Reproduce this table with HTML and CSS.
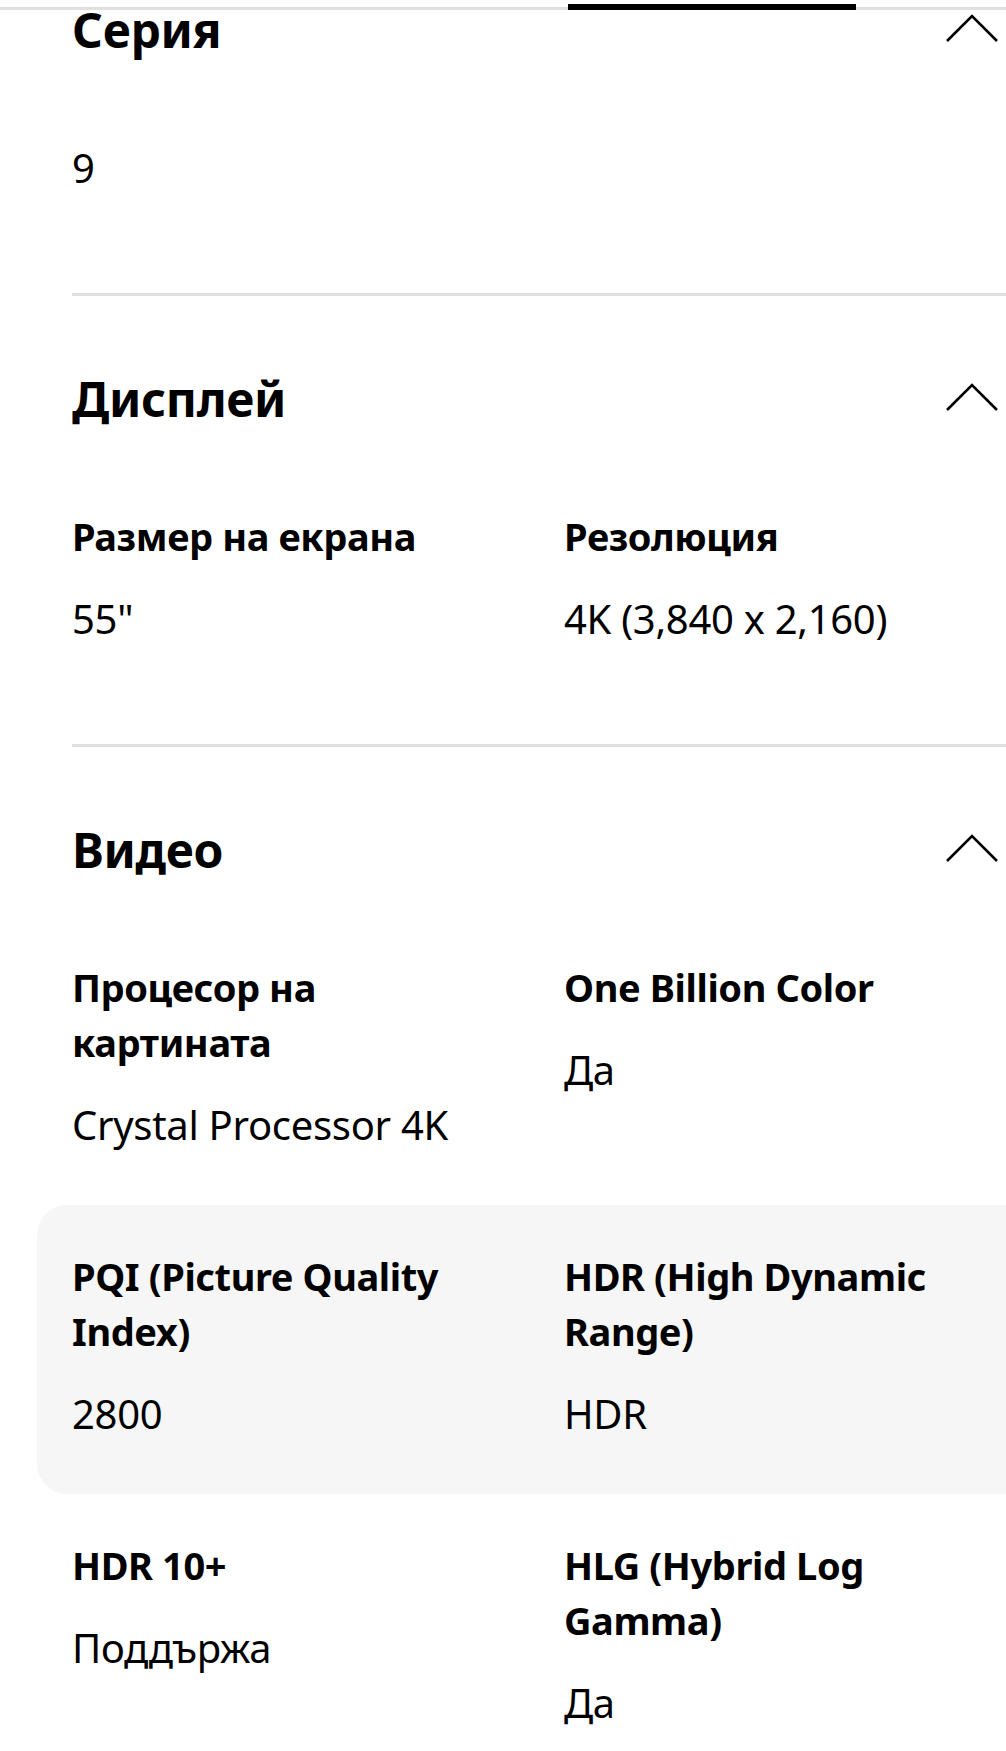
FILE: index.html
```html
<!DOCTYPE html>
<html lang="bg">
<head>
<meta charset="utf-8">
<title>Спецификации</title>
<link rel="stylesheet" href="styles.css">
</head>
<body>
<div class="tabbar" aria-hidden="true">
  <div class="tab-indicator"></div>
</div>
<main class="specs">
  <section class="spec-group">
    <div class="group-head group-head--first">
      <h2 class="group-title">Серия</h2>
      <svg class="chevron" width="54" height="30" viewBox="0 0 54 30"><polyline points="2,28 27,3 52,28" fill="none" stroke="#000" stroke-width="2.6"/></svg>
    </div>
    <div class="spec-row">
      <div class="spec">
        <div class="spec-value spec-value--solo">9</div>
      </div>
    </div>
  </section>

  <section class="spec-group">
    <div class="group-head">
      <h2 class="group-title">Дисплей</h2>
      <svg class="chevron" width="54" height="30" viewBox="0 0 54 30"><polyline points="2,28 27,3 52,28" fill="none" stroke="#000" stroke-width="2.6"/></svg>
    </div>
    <div class="spec-row">
      <div class="spec">
        <div class="spec-label">Размер на екрана</div>
        <div class="spec-value">55"</div>
      </div>
      <div class="spec">
        <div class="spec-label">Резолюция</div>
        <div class="spec-value">4K (3,840 x 2,160)</div>
      </div>
    </div>
  </section>

  <section class="spec-group">
    <div class="group-head">
      <h2 class="group-title">Видео</h2>
      <svg class="chevron" width="54" height="30" viewBox="0 0 54 30"><polyline points="2,28 27,3 52,28" fill="none" stroke="#000" stroke-width="2.6"/></svg>
    </div>
    <div class="spec-row">
      <div class="spec">
        <div class="spec-label">Процесор на картината</div>
        <div class="spec-value">Crystal Processor 4K</div>
      </div>
      <div class="spec">
        <div class="spec-label">One Billion Color</div>
        <div class="spec-value">Да</div>
      </div>
    </div>
    <div class="spec-row spec-row--shaded">
      <div class="spec">
        <div class="spec-label">PQI (Picture Quality Index)</div>
        <div class="spec-value">2800</div>
      </div>
      <div class="spec">
        <div class="spec-label">HDR (High Dynamic Range)</div>
        <div class="spec-value">HDR</div>
      </div>
    </div>
    <div class="spec-row">
      <div class="spec">
        <div class="spec-label">HDR 10+</div>
        <div class="spec-value">Поддържа</div>
      </div>
      <div class="spec">
        <div class="spec-label">HLG (Hybrid Log Gamma)</div>
        <div class="spec-value">Да</div>
      </div>
    </div>
  </section>
</main>
</body>
</html>
```

FILE: styles.css
```css
html, body {
  margin: 0;
  padding: 0;
  background: #fff;
}

body {
  font-family: "Noto Sans", "Open Sans", "DejaVu Sans", sans-serif;
  color: #000;
  overflow: hidden;
  position: relative;
}

.tabbar {
  position: absolute;
  top: 7px;
  left: 0;
  right: 0;
  height: 3px;
  background: #e0e0e0;
  z-index: 2;
}

.tab-indicator {
  position: absolute;
  top: -3px;
  left: 568px;
  width: 288px;
  height: 6px;
  background: #000;
}

.specs {
  padding-left: 72px;
}

.spec-group {
  border-bottom: 3px solid #dedede;
  padding-bottom: 45px;
  margin-right: -40px;
}

.group-head {
  display: flex;
  align-items: center;
  justify-content: space-between;
  padding-top: 73px;
  margin-bottom: 36px;
  padding-right: 47px;
}

.group-head--first {
  padding-top: 0;
}

.group-title {
  margin: 0;
  font-size: 48px;
  line-height: 60px;
  font-weight: 700;
  letter-spacing: -0.3px;
}

.chevron {
  display: block;
  margin-top: -4px;
}

.spec-row {
  display: grid;
  grid-template-columns: 440px 440px;
  column-gap: 52px;
  padding: 44px 0 53px;
}

.spec-row--shaded {
  background: #f6f6f6;
  margin-left: -35px;
  padding-left: 35px;
  border-radius: 30px 0 0 30px;
}

.spec-label {
  font-size: 38px;
  line-height: 55px;
  font-weight: 700;
  letter-spacing: -0.4px;
}

.spec-value {
  font-size: 40px;
  line-height: 55px;
  font-weight: 400;
  margin-top: 27px;
  letter-spacing: -0.3px;
}

.spec-value--solo {
  margin-top: 0;
}
```
